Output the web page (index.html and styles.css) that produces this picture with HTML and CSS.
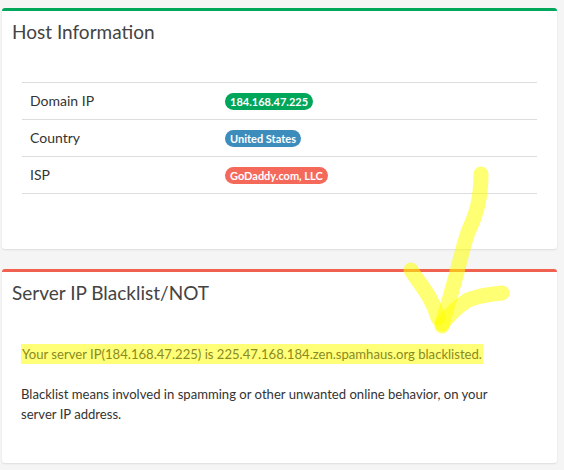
FILE: index.html
```html
<!DOCTYPE html>
<html>

<head>
  <title>Server Check</title>
  <link rel="stylesheet" href="styles.css">
</head>

<body>
  <div class="content">
    <!-- Host information box -->
    <div class="box box-success">
      <div class="box-header">
        <h3 class="box-title">Host Information</h3>
      </div>
      <div class="box-body">
        <table class="info-table">
          <tr>
            <td class="label-cell">Domain IP</td>
            <td><span class="badge bg-green">184.168.47.225</span></td>
          </tr>
          <tr>
            <td class="label-cell">Country</td>
            <td><span class="badge bg-blue">United States</span></td>
          </tr>
          <tr>
            <td class="label-cell">ISP</td>
            <td><span class="badge bg-red">GoDaddy.com, LLC</span></td>
          </tr>
        </table>
      </div>
    </div>

    <!-- Blacklist box -->
    <div class="box box-danger">
      <div class="box-header">
        <h3 class="box-title">Server IP Blacklist/NOT</h3>
      </div>
      <div class="box-body">
        <p><span class="highlight">Your server IP(184.168.47.225) is 225.47.168.184.zen.spamhaus.org blacklisted.</span></p>
        <p>Blacklist means involved in spamming or other unwanted online behavior, on your server IP address.</p>
      </div>
    </div>
  </div>

  <!-- highlighter scribble on top of the screenshot -->
  <svg class="scribble" width="564" height="470" viewBox="0 0 564 470">
    <g fill="none" stroke="#ffff00" stroke-opacity="0.55" stroke-width="15" stroke-linecap="round" stroke-linejoin="round">
      <path d="M481 174 C481 200 476 215 468 232 C462 250 458 270 452 290 C448 305 444 316 442 326" />
      <path d="M411 270 C420 285 432 296 438 318" />
      <path d="M502 293 C490 294 478 296 468 300 C458 306 450 314 442 324" />
    </g>
  </svg>
</body>

</html>
```

FILE: styles.css
```css
/* Global Styles */
body {
  margin: 0;
  background-color: #f5f5f5;
  font-family: Lato, "Open Sans", sans-serif;
  font-size: 13.1px;
  color: #333;
}

.content {
  padding: 8px 7px 0 2px;
}

/* Box CSS */
.box {
  background-color: #fff;
  border-top: 3px solid #d2d6de;
  border-radius: 3px;
  box-shadow: 0 1px 2px rgba(0, 0, 0, 0.1);
  margin-bottom: 20px;
}

.box-success {
  border-top-color: #00a65a;
  height: 238px;
}

.box-danger {
  border-top-color: #f0614f;
  height: 191px;
}

.box-header {
  padding: 7px 10px 10px;
}

.box-title {
  margin: 0;
  font-size: 19px;
  font-weight: normal;
  line-height: 28px;
  color: #444;
}

.box-body {
  padding: 10px 20px;
}

/* Host table CSS */
.info-table {
  width: 100%;
  border-collapse: collapse;
  margin-top: 16px;
  border-bottom: 1px solid #ddd;
}

.info-table td {
  border-top: 1px solid #ddd;
  padding: 8px;
  height: 20px;
  line-height: 20px;
  font-size: 14px;
}

.info-table .label-cell {
  width: 179px;
}

.badge {
  display: inline-block;
  padding: 0 5px;
  border-radius: 10px;
  font-size: 11px;
  font-weight: 700;
  line-height: 17px;
  color: #fff;
}

.bg-green {
  background-color: #00a65a;
}

.bg-blue {
  background-color: #3c8dbc;
}

.bg-red {
  background-color: #f4695a;
}

/* Blacklist text CSS */
.box-danger .box-body {
  padding: 27px 40px 0 19px;
}

.box-danger p {
  margin: 0 0 20px;
  line-height: 20px;
}

.highlight {
  background-color: #ffff78;
  color: #8a8a22;
  padding: 2px 1px;
}

/* Scribble overlay */
.scribble {
  position: absolute;
  left: 0;
  top: 0;
  pointer-events: none;
}
```
